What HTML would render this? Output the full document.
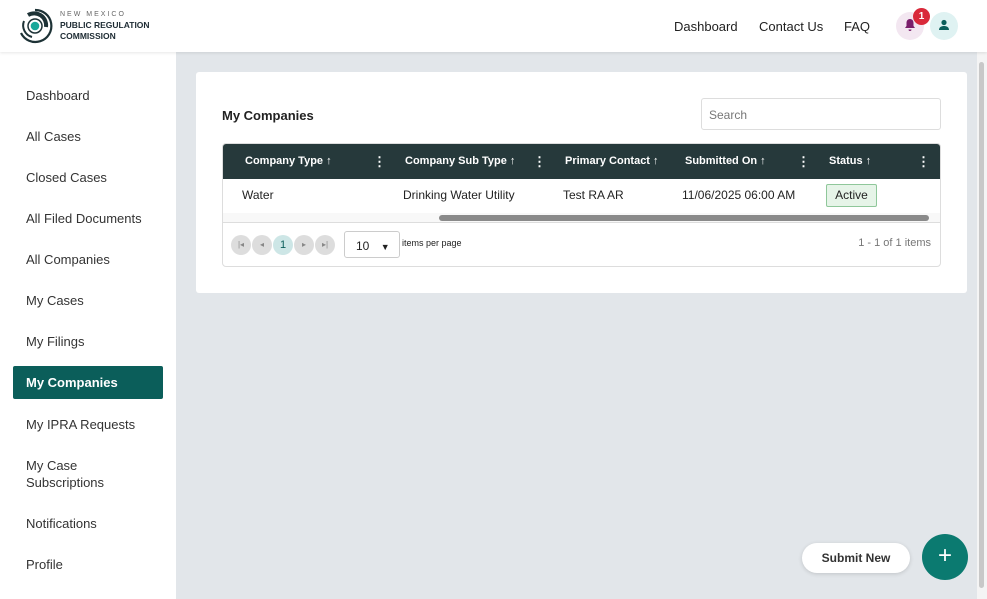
<!DOCTYPE html>
<html><head><style>
*{box-sizing:border-box;margin:0;padding:0}
body{width:987px;height:599px;overflow:hidden;font-family:"Liberation Sans",sans-serif;background:#e2e6ea;position:relative;color:#222}
.hdr{position:absolute;left:0;top:0;width:987px;height:52px;background:#fff;box-shadow:0 1px 3px rgba(0,0,0,.1);z-index:2}
.nav a{position:absolute;top:19px;font-size:13px;color:#222}
.side{position:absolute;left:0;top:52px;width:176px;height:547px;background:#fff}
.side div{position:absolute;left:26px;font-size:13px;color:#333;line-height:17px}
.side .act{left:13px;width:150px;height:33px;background:#0b5e5a;color:#fff;font-weight:bold;padding:8px 13px;border-radius:2px}
.card{position:absolute;left:196px;top:72px;width:771px;height:221px;background:#fff;border-radius:3px}
.th{position:absolute;top:1px;font-size:11px;color:#fff;font-weight:bold;line-height:33px}
.td{position:absolute;top:44px;font-size:12px;color:#222}
.dots{position:absolute;top:1px;color:#fff;font-weight:bold;font-size:13px;line-height:33px}
.pb{position:absolute;top:91px;width:20px;height:20px;border-radius:50%;background:#ddd;font-size:8px;color:#888;text-align:center;line-height:20px}
</style></head><body>
<div class="hdr">
<svg style="position:absolute;left:16px;top:7px" width="38" height="38" viewBox="0 0 38 38"><path d="M19 3 A16 16 0 1 1 5 26" fill="none" stroke="#1d3236" stroke-width="2.2"/><path d="M12 8 A12 12 0 0 1 30 20" fill="none" stroke="#1d3236" stroke-width="4"/><path d="M8 14 A12 12 0 0 0 16 30" fill="none" stroke="#1d3236" stroke-width="2"/><circle cx="19" cy="19" r="7" fill="#fff" stroke="#1d3236" stroke-width="1.5"/><circle cx="19" cy="19" r="4.3" fill="#1aa89a"/></svg>
<div style="position:absolute;left:60px;top:11px;font-size:7px;letter-spacing:2px;color:#666">NEW MEXICO</div>
<div style="position:absolute;left:60px;top:20px;font-size:8.5px;font-weight:bold;color:#1d2b33;line-height:11px">PUBLIC REGULATION<br>COMMISSION</div>
<div class="nav"><a style="left:674px">Dashboard</a><a style="left:759px">Contact Us</a><a style="left:844px">FAQ</a></div>
<div style="position:absolute;left:896px;top:12px;width:28px;height:28px;border-radius:50%;background:#f3e7f1"></div>
<svg style="position:absolute;left:904px;top:18px" width="12" height="14" viewBox="0 0 12 14"><path d="M6 1C3.5 1 2.5 3 2.5 5v3L1 10h10L9.5 8V5C9.5 3 8.5 1 6 1z M4.5 11.5a1.5 1.5 0 0 0 3 0z" fill="#7a1f6b"/></svg>
<div style="position:absolute;left:913px;top:8px;width:17px;height:17px;border-radius:50%;background:#d9293a;color:#fff;font-size:10px;font-weight:bold;text-align:center;line-height:17px">1</div>
<div style="position:absolute;left:930px;top:12px;width:28px;height:28px;border-radius:50%;background:#dff2f2"></div>
<svg style="position:absolute;left:938px;top:19px" width="12" height="12" viewBox="0 0 12 12"><circle cx="6" cy="3.5" r="2.6" fill="#0b5e5a"/><path d="M1 11c0-3 2.5-4 5-4s5 1 5 4z" fill="#0b5e5a"/></svg>
</div>
<div class="side">
<div style="top:35px">Dashboard</div><div style="top:76px">All Cases</div><div style="top:117px">Closed Cases</div><div style="top:158px">All Filed Documents</div><div style="top:199px">All Companies</div><div style="top:240px">My Cases</div><div style="top:281px">My Filings</div>
<div class="act" style="top:314px">My Companies</div>
<div style="top:364px">My IPRA Requests</div><div style="top:405px">My Case<br>Subscriptions</div><div style="top:463px">Notifications</div><div style="top:504px">Profile</div>
</div>
<div style="position:absolute;left:977px;top:52px;width:10px;height:547px;background:#f4f4f4"><div style="position:absolute;left:2px;top:10px;width:5px;height:526px;background:#c8c8c8;border-radius:3px"></div></div>
<div class="card">
<div style="position:absolute;left:26px;top:36px;font-size:13px;font-weight:bold;color:#222">My Companies</div>
<div style="position:absolute;left:505px;top:26px;width:240px;height:32px;border:1px solid #ddd;border-radius:3px;font-size:12px;color:#777;padding:9px 7px">Search</div>
<div style="position:absolute;left:26px;top:71px;width:719px;height:124px;border:1px solid #ddd;border-radius:4px;overflow:hidden">
<div style="position:absolute;left:0;top:0;width:719px;height:35px;background:#26393b"></div>
<div class="th" style="left:22px">Company Type ↑</div><div class="dots" style="left:150px">⋮</div>
<div class="th" style="left:182px">Company Sub Type ↑</div><div class="dots" style="left:310px">⋮</div>
<div class="th" style="left:342px">Primary Contact ↑</div>
<div class="th" style="left:462px">Submitted On ↑</div><div class="dots" style="left:574px">⋮</div>
<div class="th" style="left:606px">Status ↑</div><div class="dots" style="left:694px">⋮</div>
<div class="td" style="left:19px">Water</div><div class="td" style="left:180px">Drinking Water Utility</div><div class="td" style="left:340px">Test RA AR</div><div class="td" style="left:459px">11/06/2025 06:00 AM</div>
<div style="position:absolute;left:603px;top:40px;width:51px;height:23px;border:1px solid #8fc79a;background:#e6f4e8;border-radius:2px;font-size:12px;text-align:center;line-height:21px">Active</div>
<div style="position:absolute;left:0;top:69px;width:719px;height:10px;background:#f8f8f8;border-bottom:1px solid #ddd"><div style="position:absolute;left:216px;top:2px;width:490px;height:6px;background:#8a8a8a;border-radius:3px"></div></div>
<div class="pb" style="left:8px">|◂</div><div class="pb" style="left:29px">◂</div><div class="pb" style="left:50px;background:#cde6e6;color:#0b5e5a;font-size:11px">1</div><div class="pb" style="left:71px">▸</div><div class="pb" style="left:92px">▸|</div>
<div style="position:absolute;left:121px;top:87px;width:56px;height:27px;border:1px solid #ccc;border-radius:3px;font-size:12px;padding:7px 11px;white-space:nowrap">10 <span style="font-size:9px;margin-left:8px">▼</span></div>
<div style="position:absolute;left:179px;top:94px;font-size:9px">items per page</div>
<div style="position:absolute;right:9px;top:93px;font-size:11px;color:#777">1 - 1 of 1 items</div>
</div></div>
<div style="position:absolute;left:802px;top:543px;width:108px;height:30px;background:#fff;border-radius:15px;box-shadow:0 1px 4px rgba(0,0,0,.15);font-size:12px;font-weight:bold;text-align:center;line-height:30px;color:#333">Submit New</div>
<div style="position:absolute;left:922px;top:534px;width:46px;height:46px;border-radius:50%;background:#0b7a70;color:#fff;font-size:24px;text-align:center;line-height:44px">+</div>
</body></html>
